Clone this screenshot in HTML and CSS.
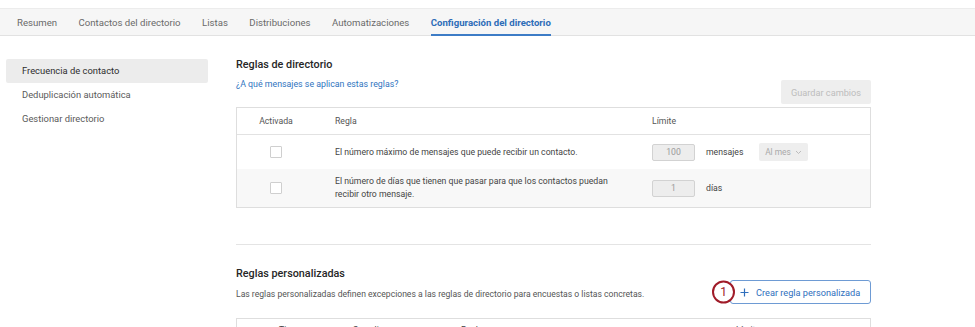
FILE: index.html
```html
<!DOCTYPE html>
<html lang="es">
<head>
    <meta charset="UTF-8">
    <title>Configuración del directorio</title>
    <link rel="stylesheet" href="styles.css">
</head>
<body>
    <!-- Tabs -->
    <nav class="tabs">
        <a class="tab">Resumen</a>
        <a class="tab">Contactos del directorio</a>
        <a class="tab">Listas</a>
        <a class="tab">Distribuciones</a>
        <a class="tab">Automatizaciones</a>
        <a class="tab active">Configuración del directorio</a>
    </nav>

    <div class="content">
        <aside class="sidebar">
            <div class="side-item selected">Frecuencia de contacto</div>
            <div class="side-item">Deduplicación automática</div>
            <div class="side-item">Gestionar directorio</div>
        </aside>

        <main class="main">
            <div class="section-head">
                <div>
                    <h2 class="section-title">Reglas de directorio</h2>
                    <a class="help-link">¿A qué mensajes se aplican estas reglas?</a>
                </div>
                <button class="save-btn">Guardar cambios</button>
            </div>

            <div class="rules-table">
                <div class="row head">
                    <div class="cell center">Activada</div>
                    <div class="cell rule">Regla</div>
                    <div class="cell">Límite</div>
                </div>
                <div class="row">
                    <div class="cell center"><span class="checkbox"></span></div>
                    <div class="cell rule">El número máximo de mensajes que puede recibir un contacto.</div>
                    <div class="cell limit">
                        <span class="num-input">100</span>
                        <span class="unit">mensajes</span>
                        <span class="select">Al mes
                            <svg width="7" height="5" viewBox="0 0 7 5"><path d="M1 1l2.5 2.5L6 1" fill="none" stroke="#b5b5b5" stroke-width="0.9"/></svg>
                        </span>
                    </div>
                </div>
                <div class="row alt">
                    <div class="cell center"><span class="checkbox"></span></div>
                    <div class="cell rule">El número de días que tienen que pasar para que los contactos puedan recibir otro mensaje.</div>
                    <div class="cell limit">
                        <span class="num-input">1</span>
                        <span class="unit">días</span>
                    </div>
                </div>
            </div>

            <hr class="divider">

            <div class="section-head custom">
                <div>
                    <h2 class="section-title">Reglas personalizadas</h2>
                    <p class="section-desc">Las reglas personalizadas definen excepciones a las reglas de directorio para encuestas o listas concretas.</p>
                </div>
                <button class="create-btn">
                    <span class="marker">1</span>
                    <svg width="9" height="9" viewBox="0 0 9 9"><path d="M4.5 0.5v8M0.5 4.5h8" stroke="#2f6fbd" stroke-width="1.2"/></svg>
                    Crear regla personalizada
                </button>
            </div>

            <div class="custom-table">
                <div class="custom-head">
                    <div class="cell">Tipo</div>
                    <div class="cell">Se aplica a</div>
                    <div class="cell">Regla</div>
                    <div class="cell">Límite</div>
                </div>
            </div>
        </main>
    </div>
</body>
</html>
```

FILE: styles.css
```css
html, body {
    margin: 0;
    padding: 0;
    height: 100%;
    overflow: hidden;
}

body {
    background-color: white;
    font-family: 'Roboto', 'Liberation Sans', sans-serif;
    color: #3a3a3a;
}

/* Tabs */
.tabs {
    margin-top: 8px;
    height: 26px;
    background-color: #f6f6f6;
    border-top: 1px solid #ececec;
    border-bottom: 1px solid #e2e2e2;
    display: flex;
    align-items: stretch;
    padding-left: 17px;
    gap: 21.5px;
}

.tab {
    font-size: 9.6px;
    color: #6a6a6a;
    display: flex;
    align-items: center;
    border-bottom: 2px solid transparent;
    margin-bottom: -1px;
    padding-top: 1px;
}

.tab.active {
    color: #2d6db8;
    font-weight: 700;
    border-bottom-color: #3d7cc6;
}

.content {
    display: flex;
}

/* Sidebar */
.sidebar {
    width: 202px;
    margin-left: 6px;
    padding-top: 23px;
}

.side-item {
    height: 24px;
    line-height: 24px;
    padding-left: 16px;
    font-size: 9.4px;
    color: #5a5a5a;
    border-radius: 2px;
}

.side-item.selected {
    background-color: #ececec;
    color: #2e2e2e;
}

/* Main */
.main {
    width: 635px;
    margin-left: 28px;
    padding-top: 22px;
}

.section-head {
    display: flex;
    justify-content: space-between;
    align-items: flex-start;
}

.section-title {
    margin: 0;
    font-size: 10.8px;
    line-height: 14px;
    font-weight: 500;
    color: #262626;
}

.help-link {
    display: block;
    margin-top: 6px;
    font-size: 8.8px;
    line-height: 12px;
    color: #2f74c0;
}

.save-btn {
    margin-top: 22px;
    width: 90px;
    height: 24px;
    border: none;
    border-radius: 2px;
    background-color: #eeeeee;
    color: #bdbdbd;
    font-family: inherit;
    font-size: 9.2px;
    padding: 0;
}

.rules-table {
    margin-top: 3px;
    border: 1px solid #dedede;
}

.row {
    display: grid;
    grid-template-columns: 78px 337px 1fr;
    align-items: center;
}

.row.head {
    height: 26px;
    border-bottom: 1px solid #e2e2e2;
}

.row + .row {
    height: 34px;
}

.row.alt {
    height: 38px;
    background-color: #f8f8f8;
}

.cell {
    font-size: 8.7px;
    line-height: 13px;
    color: #444;
}

.row.head .cell {
    color: #555;
}

.cell.center {
    text-align: center;
    display: flex;
    justify-content: center;
}

.cell.rule {
    padding-left: 20px;
    padding-right: 28px;
}

.checkbox {
    display: block;
    width: 10px;
    height: 10px;
    border: 1px solid #cfcfcf;
    border-radius: 1px;
    background-color: white;
}

.limit {
    display: flex;
    align-items: center;
}

.num-input {
    width: 41px;
    height: 15px;
    line-height: 15px;
    border: 1px solid #d2d2d2;
    border-radius: 2px;
    background-color: #ededed;
    text-align: center;
    color: #9a9a9a;
}

.unit {
    margin-left: 11px;
    width: 53px;
    color: #444;
}

.select {
    width: 49px;
    height: 18px;
    line-height: 18px;
    border-radius: 2px;
    background-color: #eeeeee;
    color: #a9a9a9;
    font-size: 8.4px;
    display: flex;
    align-items: center;
    justify-content: center;
    gap: 4px;
}

.divider {
    margin: 36px 0 0;
    border: none;
    border-top: 1px solid #e4e4e4;
}

.section-head.custom {
    margin-top: 22px;
}

.section-desc {
    margin: 7px 0 0;
    font-size: 8.6px;
    line-height: 12px;
    color: #555;
}

.create-btn {
    position: relative;
    margin-top: 13px;
    height: 24px;
    width: 141px;
    border: 1px solid #6e9bd4;
    border-radius: 3px;
    background-color: white;
    color: #2f6fbd;
    font-family: inherit;
    font-size: 9.2px;
    display: flex;
    align-items: center;
    gap: 7px;
    padding: 0 0 0 9px;
}

/* annotation marker over the button edge */
.marker {
    position: absolute;
    box-sizing: border-box;
    left: -19px;
    top: 50%;
    transform: translateY(-50%);
    width: 23px;
    height: 23px;
    border: 2px solid #a01b28;
    border-radius: 50%;
    background-color: white;
    color: #a01b28;
    font-size: 12px;
    line-height: 19px;
    text-align: center;
}

.custom-table {
    margin-top: 14px;
    border: 1px solid #dedede;
    height: 40px;
}

.custom-head {
    display: grid;
    grid-template-columns: 74px 108px 275px 1fr;
    padding: 5px 0 0 42px;
}
```
